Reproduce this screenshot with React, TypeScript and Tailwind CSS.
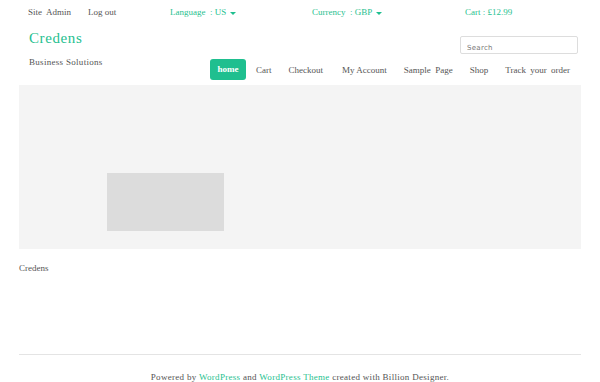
import React from "react";

const green = "text-[#1fbf8f]";

export default function App() {
  return (
    <div className="w-[600px] h-[382px] bg-white overflow-hidden font-['Liberation_Serif',serif] text-[#555]">
      {/* top bar */}
      <div className="flex items-center h-[24px] pt-[2px] text-[9px] pl-[28px]">
        <span className="w-[60px]">Site&nbsp; Admin</span>
        <span className="w-[82px]">Log out</span>
        <span className={`w-[142px] flex items-center ${green}`}>
          Language &nbsp;: US
          <span className="ml-[4px] border-x-[3px] border-t-[3px] border-x-transparent border-t-[#1fbf8f]" />
        </span>
        <span className={`w-[153px] flex items-center ${green}`}>
          Currency &nbsp;: GBP
          <span className="ml-[4px] border-x-[3px] border-t-[3px] border-x-transparent border-t-[#1fbf8f]" />
        </span>
        <span className={green}>Cart : £12.99</span>
      </div>

      {/* header */}
      <div className="mx-[19px] flex justify-between h-[61px]">
        <div className="pl-[10px] pt-[3px]">
          <div className={`text-[15px] leading-[22px] tracking-[0.6px] ${green}`}>Credens</div>
          <div className="text-[9px] mt-[7px] tracking-[0.3px]">Business Solutions</div>
        </div>
        <div className="flex flex-col items-end">
          <input
            placeholder="Search"
            className="mt-[12px] mr-[3px] w-[118px] h-[18px] border border-[#ddd] rounded-[2px] px-[6px] pt-[6px] text-[7px] font-['DejaVu_Sans',sans-serif] tracking-[0.3px] placeholder:text-[#777] outline-none"
          />
          <nav className="flex items-center mt-[5px] text-[9px] mr-[11px]">
            <span className="bg-[#1fbf8f] text-white font-bold rounded-[3px] w-[36px] h-[21px] pt-[1px] flex items-center justify-center">home</span>
            <span className="ml-[10px] pt-[2px]">Cart</span>
            <span className="ml-[17px] pt-[2px]">Checkout</span>
            <span className="ml-[19px] pt-[2px]">My Account</span>
            <span className="ml-[17px] pt-[2px]">Sample&nbsp; Page</span>
            <span className="ml-[17px] pt-[2px]">Shop</span>
            <span className="ml-[17px] pt-[2px] [word-spacing:2px]">Track your order</span>
          </nav>
        </div>
      </div>

      {/* hero */}
      <div className="mx-[19px] bg-[#f4f4f4] h-[164px] pl-[88px] pt-[88px]">
        <div className="w-[117px] h-[58px] bg-[#dcdcdc]" />
      </div>

      <div className="mx-[19px] mt-[13px] text-[9px]">Credens</div>

      {/* footer */}
      <div className="mx-[19px] mt-[78px] border-t border-[#e4e4e4] pt-[16px] text-center text-[9px] tracking-[0.3px]">
        Powered by <span className={green}>WordPress</span> and <span className={green}>WordPress Theme</span> created with Billion Designer.
      </div>
    </div>
  );
}
